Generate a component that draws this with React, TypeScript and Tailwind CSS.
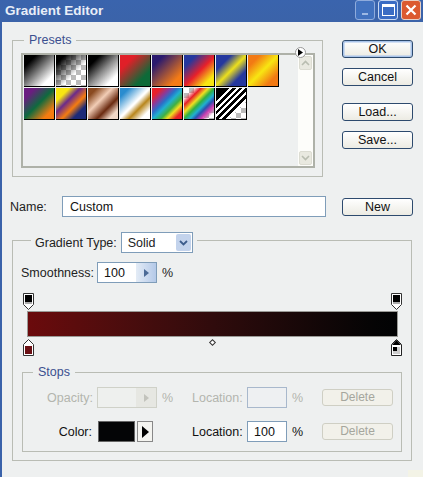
const swatches = [
  "bg-[linear-gradient(135deg,#000_20%,#fff_80%)]",
  "bg-[linear-gradient(135deg,#000_15%,#0000_62%),conic-gradient(#bbb_25%,#fff_0_50%,#bbb_0_75%,#fff_0)] bg-[length:auto,10px_10px]",
  "bg-[linear-gradient(135deg,#000_20%,#888_50%,#fff_80%)]",
  "bg-[linear-gradient(135deg,#e01f28_25%,#0d6a38_75%)]",
  "bg-[linear-gradient(135deg,#2a1a6e_20%,#f47b16_80%)]",
  "bg-[linear-gradient(135deg,#25389e_20%,#e8202a_52%,#f8e612_82%)]",
  "bg-[linear-gradient(135deg,#25389e_25%,#ede01c_50%,#25389e_75%)]",
  "bg-[linear-gradient(135deg,#f27a14_20%,#f8e612_50%,#f27a14_80%)]",
  "bg-[linear-gradient(135deg,#6b1d80_18%,#0e6a3e_50%,#f57c10_82%)]",
  "bg-[linear-gradient(135deg,#f8e612_22%,#6b2a8a_40%,#f57c10_60%,#1c2a78_78%)]",
  "bg-[linear-gradient(135deg,#8a4a20_15%,#f2cdb6_40%,#6a2a10_65%,#f0d8c8_85%)]",
  "bg-[linear-gradient(135deg,#2a8ccf_15%,#fff_48%,#fff_50%,#b8861c_65%,#fff_85%)]",
  "bg-[linear-gradient(135deg,#e8202a_15%,#8a3a9a_30%,#2a70c8_42%,#20b0d0_52%,#40b040_65%,#f0e020_75%,#e8202a_88%)]",
  "bg-[linear-gradient(135deg,#0000_15%,#e8202a_28%,#f0e020_40%,#30b040_50%,#20b0d0_60%,#2a50b0_68%,#d040b0_78%,#0000_90%),conic-gradient(#bbb_25%,#fff_0_50%,#bbb_0_75%,#fff_0)] bg-[length:auto,10px_10px]",
  "bg-[linear-gradient(135deg,#000_22%,#fff_22%_27%,#000_27%_33%,#fff_33%_38%,#000_38%_44%,#fff_44%_49%,#000_49%_55%,#fff_55%_60%,#000_60%_66%,#fff_66%_71%,#0000_71%),conic-gradient(#bbb_25%,#fff_0_50%,#bbb_0_75%,#fff_0)] bg-[length:auto,10px_10px]",
]

const fieldBorder = "border border-[#b9bcb4]"
const inputClass = "flex h-[21px] items-center border border-[#7f9db9] bg-white pl-[7px] text-[#111]"

function SideButton({ label, primary, className }: { label: string; primary?: boolean; className?: string }) {
  return (
    <button
      type="button"
      className={`h-[18px] w-[71px] rounded-[3px] border border-[#2d4a6e] bg-gradient-to-b from-white to-[#ecebe3] text-[12.5px] leading-[16px] text-[#111] ${primary ? "shadow-[inset_0_0_0_1.5px_#a9c4ea]" : ""} ${className ?? ""}`}
    >
      {label}
    </button>
  )
}

function DeleteButton() {
  return (
    <button type="button" className="ml-auto h-[17px] w-[71px] rounded-[3px] border border-[#cfcfc4] bg-[#f2f1ea] text-[12px] leading-[15px] text-[#a5a69d]">
      Delete
    </button>
  )
}

function Spin() {
  return (
    <span className="ml-auto flex h-full w-[20px] items-center justify-center bg-gradient-to-r from-[#e4ecf6] to-[#b4c9e8]">
      <svg width="5" height="8" viewBox="0 0 5 8"><path d="M0 0l5 4-5 4z" fill="#4b6a96" /></svg>
    </span>
  )
}

function TopStop({ fill }: { fill: string }) {
  return (
    <svg width="11" height="17" viewBox="0 0 11 17" className="block">
      <path d="M.5.5h10v11L5.5 16.5.5 11.5z" fill="#fff" stroke="#333" />
      <rect x="2" y="2" width="7" height="7" fill={fill} />
      <rect x="2" y="9" width="7" height="2" fill="#aaa" />
    </svg>
  )
}

function ScrollBtn({ up }: { up?: boolean }) {
  return (
    <span className="flex h-[14px] w-[13px] items-center justify-center rounded-[2px] border border-[#dcdcd2] bg-[#e9e9e0]">
      <svg width="9" height="6" viewBox="0 0 9 6"><path d={up ? "M1 5l3.5-3.5L8 5" : "M1 1l3.5 3.5L8 1"} fill="none" stroke="#b9bdb0" strokeWidth="1.6" /></svg>
    </span>
  )
}

export default function App() {
  return (
    <div className="relative flex h-[477px] w-[423px] flex-col overflow-hidden bg-[#eef0f0] text-[12.5px] leading-[16px] text-[#222] [font-family:'Liberation_Sans',sans-serif]">
      {/* タイトルバー */}
      <div className="flex h-[22px] shrink-0 items-start bg-gradient-to-b from-[#3a64ad] to-[#3b63a9] pl-[5px] pr-[2px]">
        <span className="mt-[2px] text-[13.5px] font-bold leading-[18px] text-[#e8eef8]">Gradient Editor</span>
        <div className="ml-auto flex gap-[3px]">
          <span className="flex h-[20px] w-[20px] items-end rounded-[3px] border border-[#8fabdc] bg-[#4272bf] pb-[4px] pl-[6px]">
            <span className="h-[2px] w-[6px] bg-[#9db8e4]" />
          </span>
          <span className="flex h-[20px] w-[20px] items-center justify-center rounded-[3px] border border-[#c8d8f2] bg-[#3a6cc4]">
            <span className="h-[12px] w-[13px] border border-t-[3px] border-white" />
          </span>
          <span className="flex h-[20px] w-[20px] items-center justify-center rounded-[3px] border border-[#e8d0c4] bg-[#dc5a30]">
            <svg width="12" height="12" viewBox="0 0 12 12"><path d="M1.5 1.5l9 9M10.5 1.5l-9 9" stroke="#fff" strokeWidth="2.2" /></svg>
          </span>
        </div>
      </div>

      <div className="flex min-h-0 flex-1 flex-col border-l-2 border-l-[#3a62aa] pl-[10px]">
        {/* Presets + 右側ボタン */}
        <div className="mt-[10px] flex">
          <fieldset className={`relative h-[145px] w-[311px] ${fieldBorder} pl-[8px] pt-[5px]`}>
            <legend className="ml-[3px] px-[5px] text-[#3b4f8f]">Presets</legend>
            <span className="absolute right-[16px] top-[-1px] flex h-[11px] w-[11px] items-center justify-center rounded-full border border-[#999] bg-white">
              <svg width="5" height="7" viewBox="0 0 5 7"><path d="M0 0l5 3.5L0 7z" fill="#000" /></svg>
            </span>
            <div className="flex h-[115px] w-[294px] border-2 border-[#aeb1a8]">
              <div className="flex flex-1 flex-wrap content-start gap-[1px] pl-[1px]">
                {swatches.map((s, i) => (
                  <div key={i} className="h-[32px] w-[31px] border-r border-b border-black bg-white">
                    <div className={`h-full w-full ${s}`} />
                  </div>
                ))}
              </div>
              <div className="flex w-[15px] flex-col items-center justify-between bg-[#fdfdfa] py-[1px]">
                <ScrollBtn up />
                <ScrollBtn />
              </div>
            </div>
          </fieldset>
          <div className="ml-[19px] flex flex-col">
            <SideButton label="OK" primary className="mt-[8px]" />
            <SideButton label="Cancel" className="mt-[10px]" />
            <SideButton label="Load..." className="mt-[17px]" />
            <SideButton label="Save..." className="mt-[10px]" />
          </div>
        </div>

        {/* Name */}
        <div className="mt-[19px] flex items-center">
          <span className="-ml-[2px] w-[52px]">Name:</span>
          <div className={`${inputClass} w-[264px]`}>Custom</div>
          <SideButton label="New" className="ml-[16px]" />
        </div>

        {/* Gradient Type */}
        <fieldset className={`mt-[11px] flex h-[233px] w-[399px] flex-col ${fieldBorder} px-[9px]`}>
          <legend className="ml-[9px] flex items-center px-[4px] pt-[4px]">
            <span>Gradient Type:</span>
            <span className="ml-[4px] flex h-[21px] w-[72px] items-center border border-[#7f9db9] bg-white pl-[6px]">
              Solid
              <span className="ml-auto mr-[1px] flex h-[17px] w-[15px] items-center justify-center rounded-[2px] bg-[#c3d3ec]">
                <svg width="9" height="6" viewBox="0 0 9 6"><path d="M1 1l3.5 3.5L8 1" fill="none" stroke="#3d5d8c" strokeWidth="1.8" /></svg>
              </span>
            </span>
          </legend>

          <div className="mt-[9px] flex items-center">
            <span className="-ml-[1px] w-[76px]">Smoothness:</span>
            <div className="flex h-[21px] w-[60px] items-center border border-[#7f9db9] bg-white pl-[6px] text-[#111]">
              100
              <Spin />
            </div>
            <span className="ml-[5px]">%</span>
          </div>

          {/* グラデーションバー */}
          <div className="mt-[10px] flex w-[380px] justify-between pl-[1px]">
            <TopStop fill="#000" />
            <TopStop fill="#000" />
          </div>
          <div className="ml-[5px] mt-[1px] h-[26px] w-[371px] border border-[#9a9a96] bg-gradient-to-r from-[#6b0a0c] via-[#300b0c] to-[#020304]" />
          <div className="mt-[2px] flex w-[380px] items-start justify-between pl-[1px]">
            <svg width="11" height="17" viewBox="0 0 11 17" className="block">
              <path d="M.5 16.5h10V5.5L5.5.5.5 5.5z" fill="#fff" stroke="#333" />
              <rect x="2" y="7" width="7" height="8" fill="#6b1014" />
            </svg>
            <span className="mt-[1px] h-[5px] w-[5px] rotate-45 border border-[#333] bg-white" />
            <svg width="11" height="17" viewBox="0 0 11 17" className="block">
              <path d="M.5 16.5h10V5.5L5.5.5.5 5.5z" fill="#fff" stroke="#222" />
              <path d="M1 6L5.5 1 10 6z" fill="#000" />
              <rect x="2" y="8" width="7" height="7" fill="#ccc" />
              <rect x="2" y="8" width="4" height="4" fill="#000" />
            </svg>
          </div>

          {/* Stops */}
          <fieldset className="mt-[8px] w-[380px] border border-[#b9bcb4]">
            <legend className="ml-[10px] px-[5px] text-[#3b4f8f]">Stops</legend>
            <div className="pl-[24px] pr-[8px]">
              <div className="mt-[7px] flex h-[21px] items-center text-[#b3b5ae]">
                <span className="w-[50px]">Opacity:</span>
                <div className="flex h-[21px] w-[60px] items-center border border-[#cfd1c8] bg-[#eef0ee]">
                  <span className="ml-auto flex h-full w-[20px] items-center justify-center bg-[#e6e7e2]">
                    <svg width="5" height="8" viewBox="0 0 5 8"><path d="M0 0l5 4-5 4z" fill="#c2c3bc" /></svg>
                  </span>
                </div>
                <span className="w-[35px] pl-[5px]">%</span>
                <span className="w-[55px]">Location:</span>
                <div className="h-[21px] w-[40px] border border-[#a8b8cc] bg-[#eef0f2]" />
                <span className="ml-[5px]">%</span>
                <DeleteButton />
              </div>
              <div className="mb-[9px] mt-[13px] flex h-[21px] items-center">
                <span className="w-[51px] pr-[6px] text-right text-[#111]">Color:</span>
                <div className="h-[21px] w-[37px] border border-[#666] bg-[#040506]" />
                <span className="ml-[2px] flex h-[21px] w-[16px] items-center justify-center border border-[#888] bg-[#f4f4f0]">
                  <svg width="7" height="12" viewBox="0 0 7 12"><path d="M0 0l7 6-7 6z" fill="#000" /></svg>
                </span>
                <span className="ml-[39px] w-[55px] text-[#111]">Location:</span>
                <div className="flex h-[21px] w-[40px] items-center border border-[#7f9db9] bg-white pl-[6px] text-[#111]">100</div>
                <span className="ml-[5px] text-[#111]">%</span>
                <DeleteButton />
              </div>
            </div>
          </fieldset>
        </fieldset>
      </div>
      <span className="absolute bottom-0 right-0 h-[7px] w-[15px] bg-[#f3f3e6]" />
    </div>
  )
}
